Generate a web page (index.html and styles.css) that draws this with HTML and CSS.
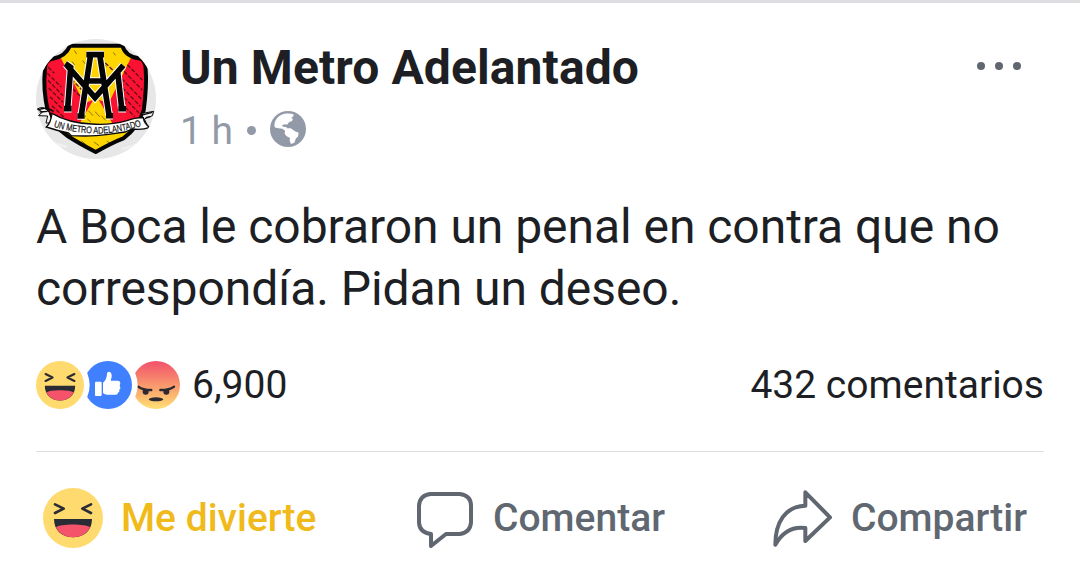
FILE: index.html
```html
<!DOCTYPE html>
<html lang="es">
<head>
<meta charset="utf-8">
<title>Un Metro Adelantado</title>
<link rel="stylesheet" href="styles.css">
</head>
<body>
<svg class="defs" aria-hidden="true">
  <defs>
    <linearGradient id="anger" x1="0" y1="0" x2="0" y2="1">
      <stop offset=".05" stop-color="#f2566b"/>
      <stop offset=".95" stop-color="#ffd972"/>
    </linearGradient>
    <symbol id="haha" viewBox="39 143 180 180">
      <circle cx="129" cy="233" r="90" fill="#ffda6e"/>
      <path d="M75 192l26 13-26 13M183 192l-26 13 26 13" fill="none" stroke="#2a2c35" stroke-width="8" stroke-linecap="round" stroke-linejoin="round"/>
      <path d="M72 236H186C186 270 162 291 129 291S72 270 72 236Z" fill="#2a2c35"/>
      <path d="M78 261C92 250 166 250 180 261C171 281 151 291 129 291S87 281 78 261Z" fill="#f5536a"/>
    </symbol>
  </defs>
</svg>
<article class="post">
  <header class="head">
    <svg class="avatar" viewBox="18 27 360 360">
      <defs>
        <clipPath id="round"><circle cx="198" cy="207" r="180"/></clipPath>
        <clipPath id="shield"><path d="M120 47H277Q286 79 327 85Q346 88 347 118Q351 166 341 242Q325 292 280 325Q244 339 197 366Q145 339 113 318Q71 289 54 246Q38 176 45 117Q45 91 68 86Q106 80 120 47Z"/></clipPath>
        <path id="ribbon-line" d="M71 290Q128 310 206 311Q275 308 340 286"/>
      </defs>
      <g clip-path="url(#round)">
        <rect x="18" y="27" width="360" height="360" fill="#e7e7e8"/>
        <path d="M30 120l20-14M340 60l30 22M345 98l28 6M40 330l70 20M275 358l70-24M70 70l20-17" stroke="#f2f2f2" stroke-width="6"/>
        <g clip-path="url(#shield)">
          <rect x="35" y="40" width="325" height="340" fill="#ffd500"/>
          <path d="M35 85H93L163 220L190 209L150 278L128 285H35ZM360 85H302L236 220L206 209L246 278L265 290H360Z" fill="#fb1232"/>
          <path d="M55 112l18 18M52 130l42 41M54 151l45 46M56 174l43 43M60 200l37 37M66 227l35 34M116 116l45 43M124 148l31 31M128 176l22 22M248 120l-23-22M292 104l45 46M282 124l55 56M275 146l60 62M277 173l54 56M282 202l45 47M286 232l28 28" stroke="#650f19" stroke-width="4" stroke-dasharray="13 5"/>
          <path d="M133 61l7 11M250 67l6 9M158 92l10 12M218 94l12 16M126 95l8 10M152 240l15 20M175 242l14 15M195 245l14 15M172 267l11 9M214 257l13 14M155 333l14 12M192 336l15 11M230 333l10 7" stroke="#8e7100" stroke-width="3"/>
        </g>
        <path d="M120 47H277Q286 79 327 85Q346 88 347 118Q351 166 341 242Q325 292 280 325Q244 339 197 366Q145 339 113 318Q71 289 54 246Q38 176 45 117Q45 91 68 86Q106 80 120 47Z" fill="none" stroke="#050505" stroke-width="12" stroke-linejoin="round"/>
        <g class="monogram halo">
          <path d="M106 101L122 112L113 234M109 104L195 203L280 106M263 126L275 234M182 74L154 255M209 74L237 255M169 74H222M172 153H219M102 236H125M142 258H164M228 257H249M265 236H288"/>
        </g>
        <g class="monogram">
          <path d="M106 101L122 112L113 234M109 104L195 203L280 106M263 126L275 234M182 74L154 255M209 74L237 255M169 74H222M172 153H219M102 236H125M142 258H164M228 257H249M265 236H288"/>
        </g>
        <path d="M57 246Q40 225 22 237L38 246 25 257 53 258 48 279H68ZM338 250L371 244 367 257 343 267 354 290 337 282Z" fill="#f5f5f5" stroke="#090909" stroke-width="3"/>
        <path d="M24 240q24-12 47 4M29 246l24-2M330 257l37-10M347 263l14-3" stroke="#090909" stroke-width="4" fill="none"/>
        <path d="M66 250Q62 280 49 291Q81 302 116 309L124 317Q187 320 229 314L285 306 307 297Q336 301 359 292Q342 281 340 263Q313 263 291 272Q236 287 185 282Q117 280 66 250Z" fill="#fff" stroke="#090909" stroke-width="4"/>
      </g>
      <text class="ribbon"><textPath href="#ribbon-line" textLength="268" lengthAdjust="spacingAndGlyphs">UN METRO ADELANTADO</textPath></text>
    </svg>
    <div class="who">
      <div class="name">Un Metro Adelantado</div>
      <div class="meta">
        <span class="time">1 h</span>
        <span class="dot"></span>
        <svg class="globe" viewBox="300 243 108 108">
          <circle cx="354" cy="297" r="54" fill="#9299a7"/>
          <path d="M314 291C311 278 319 262 333 255C346 249 361 250 370 253L371 257L364 264L369 267L366 273L357 277L351 284L347 283L336 285L339 290L349 291L351 295L362 295L375 304L386 308L384 320L378 325L373 338L363 342L359 332L360 324L349 318L344 311L345 302L337 296L326 295L317 293Z" fill="#fff"/>
        </svg>
      </div>
    </div>
    <div class="more"><i></i><i></i><i></i></div>
  </header>
  <p class="body">A Boca le cobraron un penal en contra que no correspondía. Pidan un deseo.</p>
  <div class="stats">
    <svg class="reactions" viewBox="18 33 432 144">
      <circle cx="378" cy="105" r="72" fill="url(#anger)"/>
      <path d="M325 110Q341 121 364 120M432 110Q416 121 391 120" fill="none" stroke="#2d2930" stroke-width="7" stroke-linecap="round"/>
      <circle cx="347" cy="125" r="9" fill="#2d2930"/><circle cx="409" cy="125" r="9" fill="#2d2930"/>
      <ellipse cx="378" cy="148" rx="22" ry="6" fill="#2d2930"/>
      <circle cx="234" cy="105" r="89" fill="#fff"/>
      <circle cx="234" cy="105" r="72" fill="#4080ff"/>
      <rect x="195" y="95" width="20" height="43" rx="3" fill="#fff"/>
      <path d="M219 98Q231 89 231 70Q232 65 237 65Q246 67 245 80L242 92H264Q271 93 271 100L269 107Q274 113 268 119Q270 125 264 128Q264 134 257 134H232Q224 134 219 129Z" fill="#fff"/>
      <circle cx="90" cy="105" r="89" fill="#fff"/>
      <use href="#haha" x="18" y="33" width="144" height="144"/>
    </svg>
    <span class="count">6,900</span>
    <span class="comments">432 comentarios</span>
  </div>
  <footer class="actions">
    <div class="action chosen"><svg class="face"><use href="#haha" width="60" height="60"/></svg><span>Me divierte</span></div>
    <div class="action"><svg class="bubble" viewBox="51 66 168 168"><path d="M91 72H179Q213 76 213 107V157Q211 187 179 192H138L93 228V192Q58 187 57 157V107Q59 76 91 72Z"/></svg><span>Comentar</span></div>
    <div class="action"><svg class="share" viewBox="39 60 177 171"><path d="M136 67L210 142L136 213V174C99 169 67 187 46 224C46 159 75 108 136 107Z"/></svg><span>Compartir</span></div>
  </footer>
</article>
</body>
</html>
```

FILE: styles.css
```css
* { box-sizing: border-box; }
body { margin: 0; background: #fff; font-family: Roboto, sans-serif; color: #1d1f24; }
svg { display: block; flex: none; }
.defs { width: 0; height: 0; position: absolute; }
.post { height: 564px; border-top: 3px solid #dddde2; padding: 36px 36px 0; overflow: hidden; }
.head { display: flex; height: 120px; }
.avatar { width: 120px; height: 120px; }
.monogram path { fill: none; stroke: #050505; stroke-width: 17; }
.halo path { stroke: #fff; stroke-width: 23; }
.ribbon { font: 400 29px "Liberation Sans", sans-serif; fill: #111; stroke: #111; stroke-width: .6; }
.who { margin-left: 24px; }
.name { font-size: 48px; font-weight: 700; line-height: 58px; letter-spacing: .1px; white-space: nowrap; }
.meta { display: flex; align-items: center; height: 64px; margin-top: 1px; color: #9299a7; }
.time { font-size: 39px; line-height: 62px; width: 67px; padding-top: 2px; }
.dot { width: 9px; height: 9px; border-radius: 50%; background: #9299a7; margin-right: 14px; }
.globe { width: 36px; height: 36px; margin-top: -2px; }
.more { display: flex; gap: 10px; margin: 23px 23px 0 auto; }
.more i { width: 8px; height: 8px; border-radius: 50%; background: #606770; }
.body { margin: 37px 0 0; height: 124px; font-size: 48px; line-height: 62px; letter-spacing: -.04px; }
.stats { display: flex; align-items: center; height: 48px; margin-top: 41px; font-size: 39px; line-height: 48px; }
.reactions { width: 144px; height: 48px; }
.count { margin-left: 12px; }
.comments { margin-left: auto; }
.actions { display: grid; grid-template-columns: 374px 356px auto; height: 114px; margin-top: 42px; padding: 19px 0 0 7px; border-top: 1px solid #dddfe2; align-content: center; }
.action { display: flex; align-items: center; height: 60px; font-size: 39px; font-weight: 500; line-height: 60px; color: #606770; }
.chosen { color: #f0ba1b; }
.face { width: 60px; height: 60px; margin-right: 18px; }
.bubble { width: 56px; height: 56px; margin: 4px 20px 0 0; }
.share { width: 59px; height: 57px; margin-right: 19px; }
.bubble path, .share path { fill: none; stroke: #606770; stroke-width: 12; stroke-linejoin: round; }
```
